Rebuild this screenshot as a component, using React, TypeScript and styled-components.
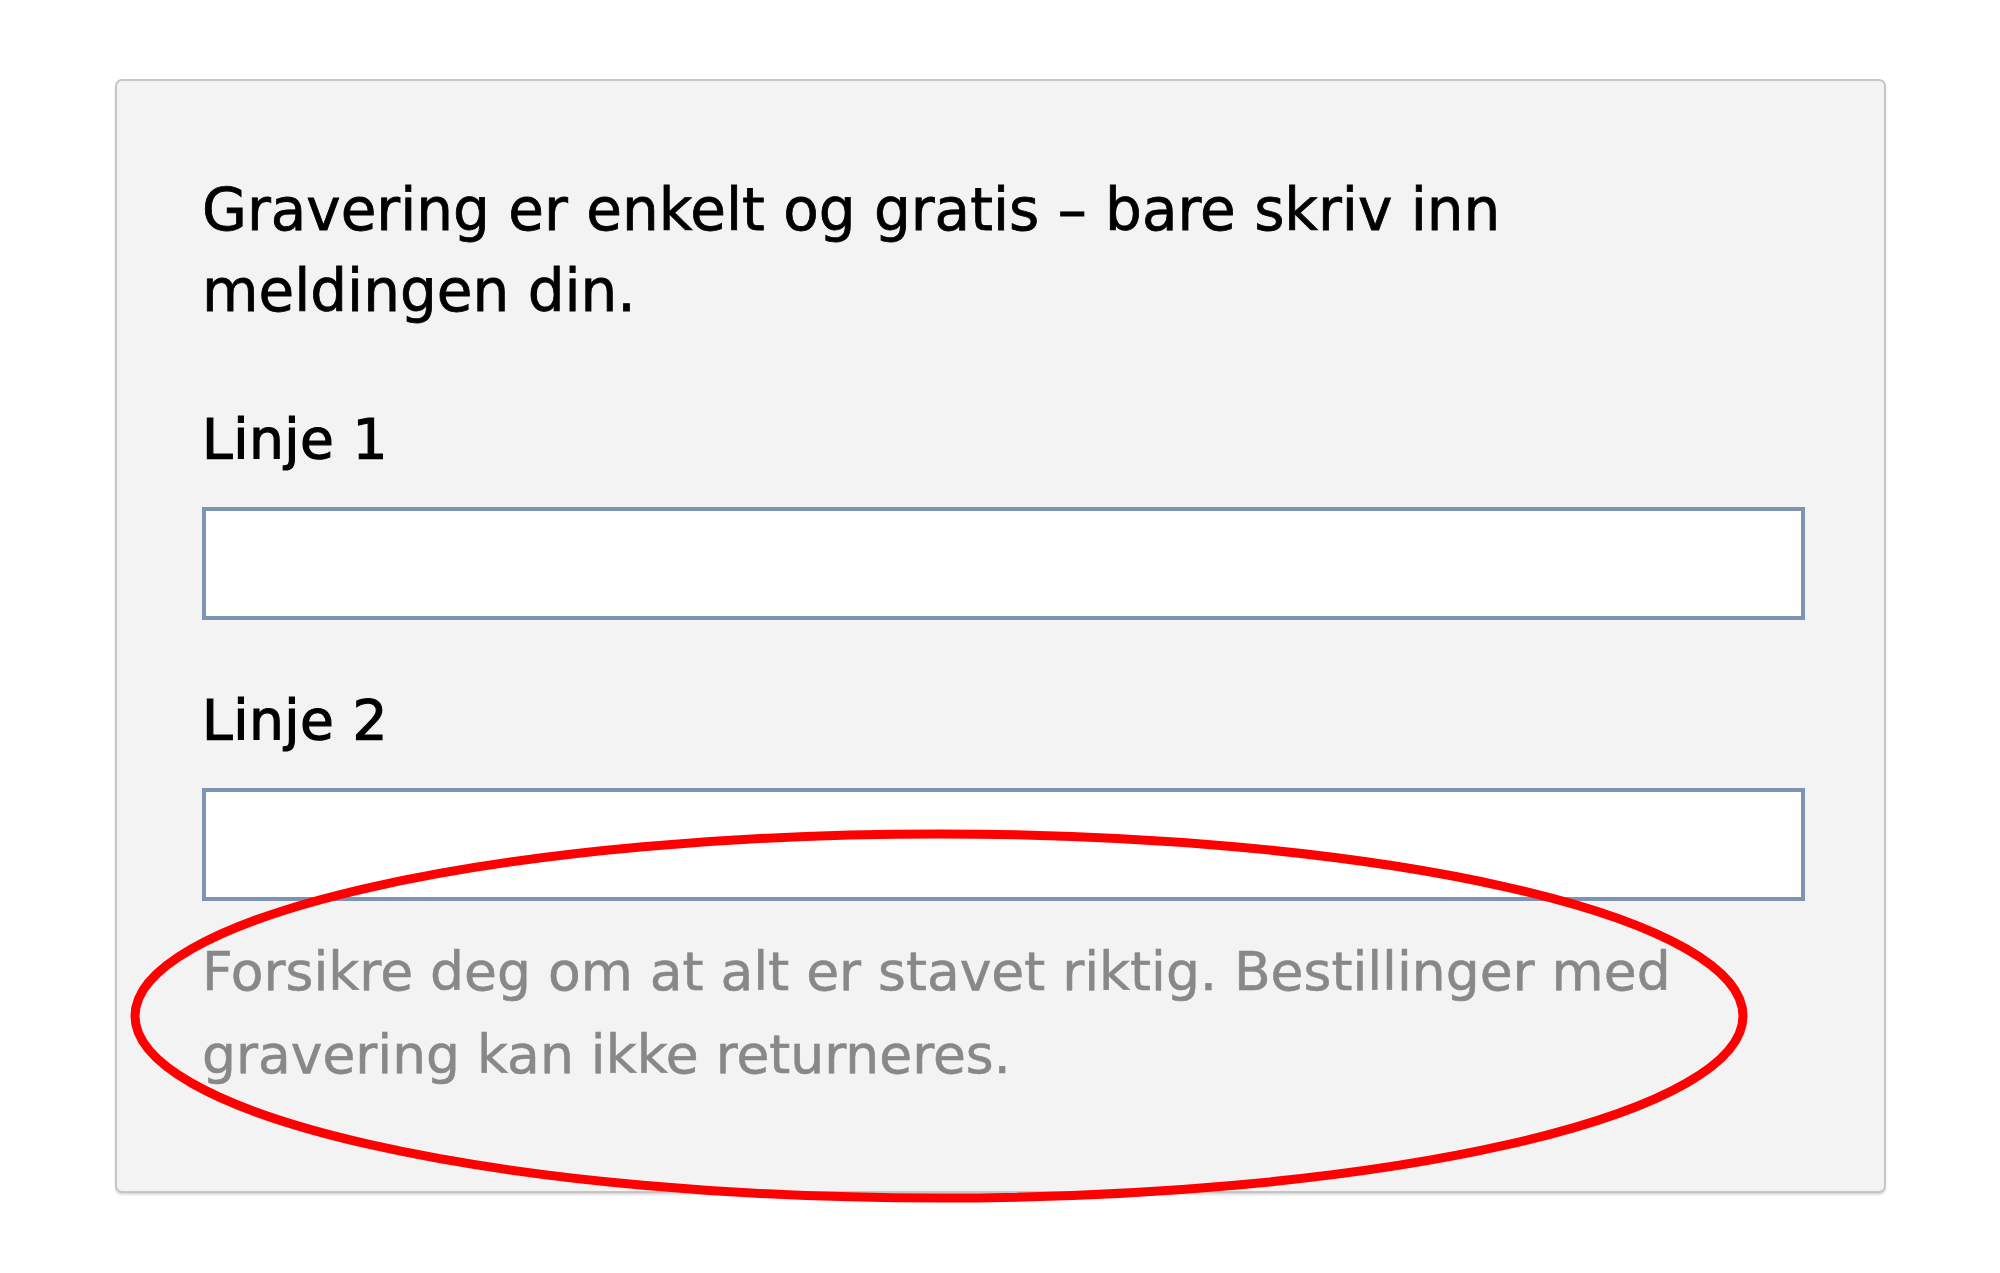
import React from "react";
import styled, { createGlobalStyle } from "styled-components";

const GlobalStyle = createGlobalStyle`
  html, body {
    margin: 0;
    padding: 0;
    background: #ffffff;
  }
  * { box-sizing: border-box; }
`;

const Page = styled.div`
  padding: 79px 0 60px 115px;
  font-family: "DejaVu Sans", Verdana, sans-serif;
`;

const Stage = styled.div`
  position: relative;
  width: 1771px;
`;

const Card = styled.form`
  display: flex;
  flex-direction: column;
  width: 100%;
  background: #f3f3f3;
  border: 2px solid #c6c6c6;
  border-radius: 7px;
  box-shadow: 0 2px 2px rgba(0, 0, 0, 0.14);
  padding: 89px 79px 95px 85px;
`;

const Intro = styled.p`
  margin: 0;
  max-width: 1440px;
  font-size: 58px;
  line-height: 81px;
  color: #000;
  -webkit-text-stroke: 0.8px #000;
`;

const Field = styled.div<{ $top: number }>`
  display: flex;
  flex-direction: column;
  gap: 35px;
  margin-top: ${(p) => p.$top}px;
`;

const Label = styled.label`
  font-size: 55px;
  line-height: 66px;
  letter-spacing: 0.5px;
  color: #000;
  -webkit-text-stroke: 1.2px #000;
`;

const TextInput = styled.input`
  width: 100%;
  height: 113px;
  background: #ffffff;
  border: 4px solid #7d93b3;
  outline: none;
  font: inherit;
  font-size: 50px;
  padding: 0 16px;
`;

const Hint = styled.p`
  margin: 29px 0 0;
  font-size: 53.5px;
  line-height: 83px;
  color: #888888;
  -webkit-text-stroke: 0.6px #888888;
`;

const Annotation = styled.svg`
  position: absolute;
  left: 0;
  top: 0;
  width: 1771px;
  height: 1140px;
  overflow: visible;
  pointer-events: none;
`;

export default function App() {
  return (
    <>
      <GlobalStyle />
      <Page>
        <Stage>
          <Card onSubmit={(e) => e.preventDefault()}>
            <Intro>Gravering er enkelt og gratis – bare skriv inn meldingen din.</Intro>
            <Field $top={74}>
              <Label htmlFor="linje1">Linje 1</Label>
              <TextInput id="linje1" type="text" />
            </Field>
            <Field $top={67}>
              <Label htmlFor="linje2">Linje 2</Label>
              <TextInput id="linje2" type="text" />
            </Field>
            <Hint>
              Forsikre deg om at alt er stavet riktig. Bestillinger med gravering kan ikke returneres.
            </Hint>
          </Card>
          <Annotation viewBox="0 0 1771 1140">
            <ellipse cx={824} cy={937} rx={804} ry={182} fill="none" stroke="#ff0000" strokeWidth={9} />
          </Annotation>
        </Stage>
      </Page>
    </>
  );
}
